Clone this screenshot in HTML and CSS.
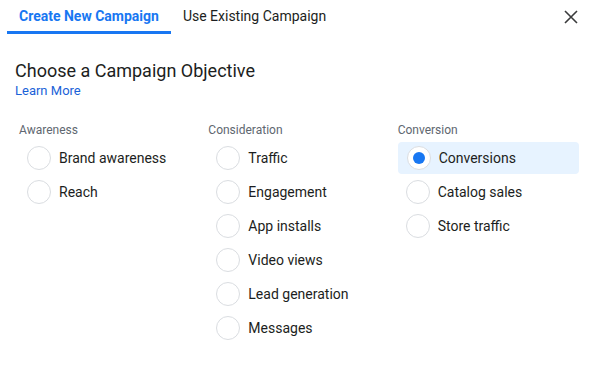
FILE: index.html
```html
<!DOCTYPE html>
<html lang="en">
<head>
  <meta charset="UTF-8">
  <meta name="viewport" content="width=device-width, initial-scale=1.0">
  <title>Create Campaign</title>
  <link rel="stylesheet" href="styles.css">
</head>
<body>
  <!-- Tabs -->
  <div class="tab-bar">
    <div class="tab active">Create New Campaign</div>
    <div class="tab">Use Existing Campaign</div>
    <button class="close" aria-label="Close">
      <svg width="14" height="14" viewBox="0 0 14 14">
        <path d="M1 1 L13 13 M13 1 L1 13" stroke="#3a3b3c" stroke-width="1.6" fill="none"/>
      </svg>
    </button>
  </div>

  <div class="intro">
    <h2>Choose a Campaign Objective</h2>
    <a href="#" class="learn">Learn More</a>
  </div>

  <!-- Objectives -->
  <div class="columns">
    <div class="column">
      <p class="label">Awareness</p>
      <div class="option"><span class="radio"></span>Brand awareness</div>
      <div class="option"><span class="radio"></span>Reach</div>
    </div>
    <div class="column">
      <p class="label">Consideration</p>
      <div class="option"><span class="radio"></span>Traffic</div>
      <div class="option"><span class="radio"></span>Engagement</div>
      <div class="option"><span class="radio"></span>App installs</div>
      <div class="option"><span class="radio"></span>Video views</div>
      <div class="option"><span class="radio"></span>Lead generation</div>
      <div class="option"><span class="radio"></span>Messages</div>
    </div>
    <div class="column">
      <p class="label">Conversion</p>
      <div class="option selected"><span class="radio"></span>Conversions</div>
      <div class="option"><span class="radio"></span>Catalog sales</div>
      <div class="option"><span class="radio"></span>Store traffic</div>
    </div>
  </div>
</body>
</html>
```

FILE: styles.css
```css
body {
  font-family: Roboto, "Liberation Sans", sans-serif;
  color: #1c1e21;
  background-color: #fff;
  margin: 0;
}

.tab-bar {
  display: flex;
  align-items: center;
  padding-left: 7px;
}

.tab {
  font-size: 14px;
  line-height: 20px;
  height: 25px;
  padding: 6px 12px 0;
  border-bottom: 3px solid transparent;
  color: #1c1e21;
}

.tab.active {
  font-weight: bold;
  color: #1877f2;
  border-bottom-color: #1877f2;
}

.close {
  margin-left: auto;
  margin-right: 8px;
  width: 24px;
  height: 24px;
  padding: 0;
  border: none;
  background: none;
  display: flex;
  align-items: center;
  justify-content: center;
  cursor: pointer;
}

.intro {
  margin: 25px 0 0 15px;
}

h2 {
  margin: 0;
  font-size: 18px;
  font-weight: normal;
  line-height: 24px;
}

.learn {
  display: block;
  font-size: 13px;
  line-height: 16px;
  color: #1b62d8;
  text-decoration: none;
}

.columns {
  display: grid;
  grid-template-columns: repeat(3, 1fr);
  gap: 8px;
  width: 560px;
  margin: 23px 0 0 19px;
}

.label {
  margin: 0 0 4px;
  font-size: 12px;
  line-height: 16px;
  color: #606770;
}

.option {
  display: flex;
  align-items: center;
  gap: 8px;
  height: 32px;
  padding-left: 8px;
  margin-bottom: 2px;
  font-size: 14px;
  border-radius: 4px;
}

.radio {
  width: 22px;
  height: 22px;
  border: 1px solid #dadde1;
  border-radius: 50%;
  background-color: #fff;
  display: flex;
  align-items: center;
  justify-content: center;
}

.selected {
  background-color: #e7f3ff;
  padding-left: 9px;
}

.selected .radio::after {
  content: "";
  width: 12px;
  height: 12px;
  border-radius: 50%;
  background-color: #1877f2;
}
```
